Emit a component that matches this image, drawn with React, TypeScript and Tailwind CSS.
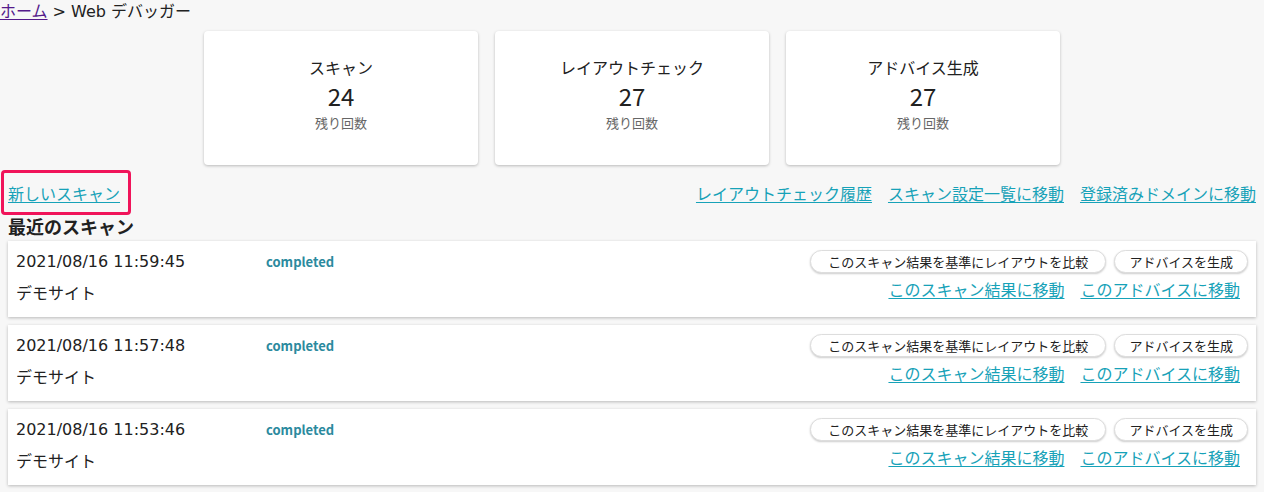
import React from "react";

// counts shown in the summary cards
type Quota = {
  label: string;
  remaining: number;
};

type Scan = {
  createdAt: string;
  status: string;
  site: string;
};

const quotas: Quota[] = [
  { label: "スキャン", remaining: 24 },
  { label: "レイアウトチェック", remaining: 27 },
  { label: "アドバイス生成", remaining: 27 },
];

const scans: Scan[] = [
  { createdAt: "2021/08/16 11:59:45", status: "completed", site: "デモサイト" },
  { createdAt: "2021/08/16 11:57:48", status: "completed", site: "デモサイト" },
  { createdAt: "2021/08/16 11:53:46", status: "completed", site: "デモサイト" },
];

const linkClass = "text-[#17a2b8] underline underline-offset-2 hover:text-[#117a8b]";
const pillClass =
  "h-[23px] rounded-full border border-[#ddd] bg-white text-[13px] leading-[21px] shadow-[0_1px_2px_rgba(0,0,0,0.2)]";

const App: React.FC = () => {
  return (
    <div className="min-h-screen bg-[#f7f7f7] text-[#212121] font-['Noto_Sans_CJK_JP','Noto_Sans',sans-serif]">
      {/* breadcrumb */}
      <div className="h-[20px] text-[16px] leading-[20px]">
        <a href="#" className="text-[#551a8b] underline underline-offset-2">
          ホーム
        </a>
        <span className="font-['DejaVu_Sans','Noto_Sans_CJK_JP',sans-serif]"> &gt; Web デバッガー</span>
      </div>

      {/* remaining counts */}
      <div className="mt-[11px] flex justify-center gap-[17px]">
        {quotas.map((q) => (
          <div
            key={q.label}
            className="flex h-[134px] w-[274px] flex-col items-center justify-center rounded-[4px] bg-white pb-[8px] shadow-[0_1px_3px_rgba(0,0,0,0.25)]"
          >
            <div className="text-[16px] leading-[26px]">{q.label}</div>
            <div className="text-[24px] leading-[32px]">{q.remaining}</div>
            <div className="text-[13px] leading-[22px] text-[#666]">残り回数</div>
          </div>
        ))}
      </div>

      {/* links */}
      <div className="mt-[5px] flex items-center justify-between pl-[1px] pr-2">
        <div className="flex h-[45px] w-[130px] items-center rounded-[4px] border-[3px] border-[#f0145a] pl-[4px]">
          <a href="#" className={`text-[16px] ${linkClass}`}>
            新しいスキャン
          </a>
        </div>
        <div className="flex gap-4 text-[16px]">
          <a href="#" className={linkClass}>
            レイアウトチェック履歴
          </a>
          <a href="#" className={linkClass}>
            スキャン設定一覧に移動
          </a>
          <a href="#" className={linkClass}>
            登録済みドメインに移動
          </a>
        </div>
      </div>

      <h2 className="h-[26px] px-2 text-[18px] font-bold leading-[22px]">最近のスキャン</h2>

      {/* recent scans */}
      <div className="flex flex-col gap-2 px-2">
        {scans.map((s) => (
          <div
            key={s.createdAt}
            className="flex h-[76px] justify-between bg-white shadow-[0_1px_3px_rgba(0,0,0,0.25)]"
          >
            <div className="pl-2 pt-[6px] text-[16px] leading-[30px]">
              <div className="flex items-center">
                <span className="w-[250px] font-['DejaVu_Sans',sans-serif]">{s.createdAt}</span>
                <span className="text-[13px] font-bold text-[#2b8a9e]">{s.status}</span>
              </div>
              <div>{s.site}</div>
            </div>
            <div className="flex flex-col items-end pr-2 pt-[9px]">
              <div className="flex gap-2">
                <button className={`${pillClass} px-[17px]`}>
                  このスキャン結果を基準にレイアウトを比較
                </button>
                <button className={`${pillClass} px-[14px]`}>アドバイスを生成</button>
              </div>
              <div className="mt-[4px] flex gap-4 pr-2 text-[16px] leading-[24px]">
                <a href="#" className={linkClass}>
                  このスキャン結果に移動
                </a>
                <a href="#" className={linkClass}>
                  このアドバイスに移動
                </a>
              </div>
            </div>
          </div>
        ))}
      </div>
    </div>
  );
};

export default App;
